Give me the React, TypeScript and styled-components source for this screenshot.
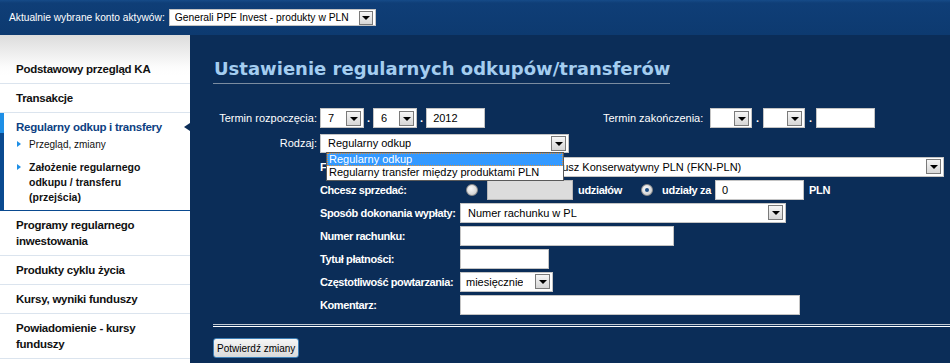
import React from "react";
import styled, { createGlobalStyle } from "styled-components";

const navy = "#0b2d58";

const GlobalStyle = createGlobalStyle`
    * { box-sizing: border-box; }
    body {
        margin: 0;
        background: ${navy};
        font-family: "Liberation Sans", Arial, sans-serif;
        font-size: 11px;
        color: #000;
    }
`;

const Header = styled.header`
    height: 35px;
    display: flex;
    align-items: center;
    gap: 4px;
    padding-left: 9px;
    background: linear-gradient(#164b88 0, #0f3e77 3px, #0d3a70 100%);
`;

const HeaderLabel = styled.span`
    color: #fff;
    font-size: 10.2px;
`;

const Body = styled.div`
    display: flex;
    min-height: 328px;
`;

const Sidebar = styled.nav`
    width: 190px;
    flex-shrink: 0;
    padding-top: 20px;
    background: linear-gradient(#dcdcdc 0, #fcfcfc 32px, #fff 40px);
`;

const NavItem = styled.div`
    padding: 6px 16px 6px;
    font-size: 11.5px;
    font-weight: bold;
    letter-spacing: -0.25px;
    line-height: 16px;
    color: #111;
    border-bottom: 1px solid #dbe4ee;
`;

const ActiveSection = styled.div`
    padding: 6px 8px 5px 12px;
    border-left: 4px solid;
    border-image: linear-gradient(#1e8fe6 0, #1e8fe6 21px, #0a4a90 21px) 1;
    border-bottom: 1px solid #dbe4ee;
    background: #fff;
`;

const ActiveTitle = styled.div`
    position: relative;
    font-size: 11.5px;
    font-weight: bold;
    letter-spacing: -0.25px;
    line-height: 16px;
    color: #0d3f82;

    &::after {
        content: "";
        position: absolute;
        right: -8px;
        top: 4px;
        border-right: 6px solid ${navy};
        border-top: 4px solid transparent;
        border-bottom: 4px solid transparent;
    }
`;

const SubItem = styled.div<{ $bold?: boolean }>`
    display: flex;
    margin-top: ${(p) => (p.$bold ? "8px" : "2px")};
    font-size: ${(p) => (p.$bold ? "10.5px" : "10px")};
    font-weight: ${(p) => (p.$bold ? "bold" : "normal")};
    line-height: 15px;
    color: #111;
`;

const Bullet = styled.span`
    flex-shrink: 0;
    width: 0;
    height: 0;
    margin: 4px 8px 0 1px;
    border-left: 4px solid #1e8fe6;
    border-top: 3.5px solid transparent;
    border-bottom: 3.5px solid transparent;
`;

const Main = styled.main`
    flex: 1;
    padding: 22px 0 6px 23px;
    background: ${navy};
`;

const Title = styled.h1`
    display: inline-block;
    margin: 0;
    padding: 0 0 2px 1px;
    font-family: "DejaVu Sans", Verdana, sans-serif;
    font-size: 18px;
    font-weight: bold;
    line-height: 24px;
    color: #a4cdf0;
    border-bottom: 1px solid #7b8ca0;
`;

const Form = styled.div`
    margin-top: 24px;
`;

const TopRow = styled.div`
    display: flex;
    align-items: center;
    height: 20px;

    & + & {
        margin-top: 5px;
    }
`;

const TopLabel = styled.label<{ $width: number; $right?: boolean }>`
    width: ${(p) => p.$width}px;
    flex-shrink: 0;
    padding-right: ${(p) => (p.$right ? "3px" : "0")};
    text-align: ${(p) => (p.$right ? "right" : "left")};
    color: #fff;
    font-size: 11px;
`;

const DateGroup = styled.div<{ $width?: number }>`
    display: flex;
    align-items: center;
    width: ${(p) => (p.$width ? `${p.$width}px` : "auto")};
`;

const Dot = styled.span<{ $gap: number }>`
    color: #fff;
    font-weight: bold;
    margin: 0 ${(p) => p.$gap}px;
`;

const SelectBox = styled.div<{ $width: number; $height?: number; $font?: number; $pl?: number }>`
    position: relative;
    flex-shrink: 0;
    display: flex;
    align-items: center;
    justify-content: space-between;
    width: ${(p) => p.$width}px;
    height: ${(p) => p.$height ?? 20}px;
    padding: 0 2px 0 ${(p) => p.$pl ?? 7}px;
    background: #fff;
    border: 1px solid #c4c4c4;
    font-size: ${(p) => p.$font ?? 11}px;
    color: #000;
    white-space: nowrap;
`;

const SelectText = styled.span`
    overflow: hidden;
`;

const ArrowBtn = styled.span<{ $size?: number }>`
    flex-shrink: 0;
    display: flex;
    align-items: center;
    justify-content: center;
    width: ${(p) => p.$size ?? 15}px;
    height: ${(p) => p.$size ?? 15}px;
    border: 1px solid #7a7a7a;
    background: linear-gradient(#f6f6f6, #d6d6d6);

    &::after {
        content: "";
        border-left: 4px solid transparent;
        border-right: 4px solid transparent;
        border-top: 4px solid #000;
        margin-top: 1px;
    }
`;

const TextInput = styled.div<{ $width: number; $disabled?: boolean }>`
    flex-shrink: 0;
    display: flex;
    align-items: center;
    width: ${(p) => p.$width}px;
    height: 20px;
    padding-left: 6px;
    background: ${(p) => (p.$disabled ? "#dcdcdc" : "#fff")};
    border: 1px solid ${(p) => (p.$disabled ? "#b8b8b8" : "#c4c4c4")};
    font-size: 11px;
    color: #000;
`;

const DropList = styled.ul`
    position: absolute;
    top: 17px;
    left: 5px;
    z-index: 5;
    width: 238px;
    margin: 0;
    padding: 0;
    list-style: none;
    background: #fff;
    border: 1px solid #5a5a5a;
`;

const DropOption = styled.li<{ $active?: boolean }>`
    height: 13.5px;
    padding-left: 2px;
    line-height: 12px;
    font-size: 11px;
    color: ${(p) => (p.$active ? "#fff" : "#000")};
    background: ${(p) => (p.$active ? "#3399ff" : "#fff")};
    outline: ${(p) => (p.$active ? "1px dotted #e0913a" : "none")};
    outline-offset: -1px;
`;

const LowerGrid = styled.div`
    display: grid;
    grid-template-columns: 140px 1fr;
    grid-auto-rows: 23px;
    align-items: center;
    margin: 2px 0 0 107px;
`;

const FieldLabel = styled.label`
    color: #fff;
    font-size: 11px;
    font-weight: bold;
    letter-spacing: -0.4px;
`;

const FieldRow = styled.div`
    display: flex;
    align-items: center;
`;

const InlineText = styled.span<{ $ml: number }>`
    margin-left: ${(p) => p.$ml}px;
    color: #fff;
    font-size: 11px;
    font-weight: bold;
    letter-spacing: -0.3px;
`;

const Radio = styled.span<{ $checked?: boolean; $ml: number }>`
    flex-shrink: 0;
    display: flex;
    align-items: center;
    justify-content: center;
    width: 12px;
    height: 12px;
    margin-left: ${(p) => p.$ml}px;
    border-radius: 50%;
    border: 1px solid #8c8c8c;
    background: radial-gradient(circle at 40% 35%, #fafafa, #c4c4c4);

    &::after {
        content: "";
        display: ${(p) => (p.$checked ? "block" : "none")};
        width: 4px;
        height: 4px;
        border-radius: 50%;
        background: #1d4f86;
    }
`;

const Spacer = styled.span<{ $ml: number }>`
    margin-left: ${(p) => p.$ml}px;
    display: flex;
`;

const Separator = styled.hr`
    height: 3px;
    margin: 8px 0 0 0;
    border: none;
    border-top: 1px solid #c2cad4;
    border-bottom: 1px solid #fff;
`;

const SubmitBtn = styled.button`
    margin-top: 11px;
    height: 20px;
    padding: 0 3px;
    font-family: "Liberation Sans", Arial, sans-serif;
    font-size: 10px;
    color: #000;
    background: linear-gradient(#f6f6f6, #dadada);
    border: 1px solid #3d7fb6;
    border-radius: 3px;
`;

const Select = ({ value, width, height }: { value: string; width: number; height?: number }) => (
    <SelectBox $width={width} $height={height}>
        <SelectText>{value}</SelectText>
        <ArrowBtn />
    </SelectBox>
);

const App = () => {
    return (
        <>
            <GlobalStyle />
            <Header>
                <HeaderLabel>Aktualnie wybrane konto aktywów:</HeaderLabel>
                <SelectBox $width={207} $height={17} $font={10.3} $pl={5}>
                    <SelectText>Generali PPF Invest - produkty w PLN</SelectText>
                    <ArrowBtn $size={14} />
                </SelectBox>
            </Header>
            <Body>
                <Sidebar>
                    <NavItem>Podstawowy przegląd KA</NavItem>
                    <NavItem>Transakcje</NavItem>
                    <ActiveSection>
                        <ActiveTitle>Regularny odkup i transfery</ActiveTitle>
                        <SubItem>
                            <Bullet />
                            Przegląd, zmiany
                        </SubItem>
                        <SubItem $bold>
                            <Bullet />
                            <span>
                                Założenie regularnego
                                <br />
                                odkupu / transferu
                                <br />
                                (przejścia)
                            </span>
                        </SubItem>
                    </ActiveSection>
                    <NavItem>
                        Programy regularnego
                        <br />
                        inwestowania
                    </NavItem>
                    <NavItem>Produkty cyklu życia</NavItem>
                    <NavItem>Kursy, wyniki funduszy</NavItem>
                    <NavItem>
                        Powiadomienie - kursy
                        <br />
                        funduszy
                    </NavItem>
                </Sidebar>

                <Main>
                    <Title>Ustawienie regularnych odkupów/transferów</Title>
                    <Form>
                        <TopRow>
                            <TopLabel $width={107} $right>Termin rozpoczęcia:</TopLabel>
                            <DateGroup $width={283}>
                                <Select value="7" width={44} />
                                <Dot $gap={3}>.</Dot>
                                <Select value="6" width={44} />
                                <Dot $gap={3}>.</Dot>
                                <TextInput $width={59}>2012</TextInput>
                            </DateGroup>
                            <TopLabel $width={107}>Termin zakończenia:</TopLabel>
                            <DateGroup>
                                <Select value="" width={42} />
                                <Dot $gap={4}>.</Dot>
                                <Select value="" width={42} />
                                <Dot $gap={4}>.</Dot>
                                <TextInput $width={59} />
                            </DateGroup>
                        </TopRow>
                        <TopRow>
                            <TopLabel $width={107} $right>Rodzaj:</TopLabel>
                            <SelectBox $width={249} $height={19}>
                                <SelectText>Regularny odkup</SelectText>
                                <ArrowBtn />
                                <DropList>
                                    <DropOption $active>Regularny odkup</DropOption>
                                    <DropOption>Regularny transfer między produktami PLN</DropOption>
                                </DropList>
                            </SelectBox>
                        </TopRow>

                        <LowerGrid>
                            <FieldLabel>Fundusz:</FieldLabel>
                            <Select value="Generali PPF Fundusz Konserwatywny PLN (FKN-PLN)" width={484} />

                            <FieldLabel>Chcesz sprzedać:</FieldLabel>
                            <FieldRow>
                                <Radio $ml={6} />
                                <Spacer $ml={9}>
                                    <TextInput $width={86} $disabled />
                                </Spacer>
                                <InlineText $ml={5}>udziałów</InlineText>
                                <Radio $checked $ml={19} />
                                <InlineText $ml={9}>udziały za</InlineText>
                                <Spacer $ml={4}>
                                    <TextInput $width={89}>0</TextInput>
                                </Spacer>
                                <InlineText $ml={5}>PLN</InlineText>
                            </FieldRow>

                            <FieldLabel>Sposób dokonania wypłaty:</FieldLabel>
                            <Select value="Numer rachunku w PL" width={326} />

                            <FieldLabel>Numer rachunku:</FieldLabel>
                            <TextInput $width={214} />

                            <FieldLabel>Tytuł płatności:</FieldLabel>
                            <TextInput $width={89} />

                            <FieldLabel>Częstotliwość powtarzania:</FieldLabel>
                            <SelectBox $width={93} $pl={5}>
                                <SelectText>miesięcznie</SelectText>
                                <ArrowBtn />
                            </SelectBox>

                            <FieldLabel>Komentarz:</FieldLabel>
                            <TextInput $width={340} />
                        </LowerGrid>
                    </Form>
                    <Separator />
                    <SubmitBtn>Potwierdź zmiany</SubmitBtn>
                </Main>
            </Body>
        </>
    );
};

export default App;
